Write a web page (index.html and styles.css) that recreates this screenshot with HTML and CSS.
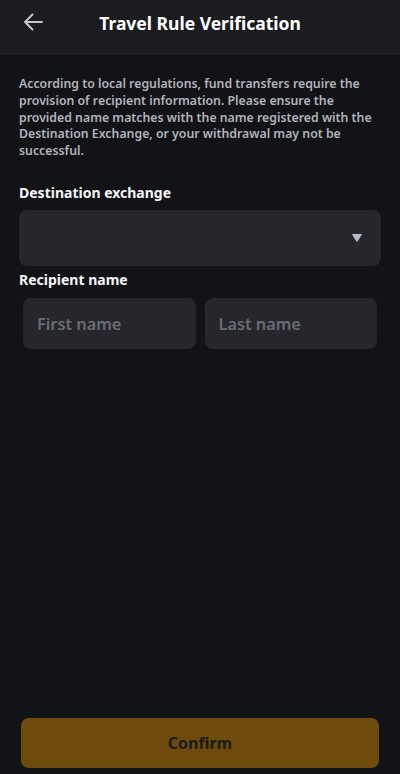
FILE: index.html
```html
<!DOCTYPE html>
<html>
<head>
<meta charset="utf-8">
<link rel="stylesheet" href="styles.css">
</head>
<body>
<div class="page">
  <header class="topbar">
    <svg class="back" width="20" height="18" viewBox="0 0 20 18"><path d="M19 9H2M9.5 1.5L2 9l7.5 7.5" fill="none" stroke="#c4c7cd" stroke-width="2" stroke-linecap="round" stroke-linejoin="round"/></svg>
    <h1 class="title">Travel Rule Verification</h1>
  </header>
  <main class="content">
    <p class="notice">According to local regulations, fund transfers require the provision of recipient information. Please ensure the provided name matches with the name registered with the Destination Exchange, or your withdrawal may not be successful.</p>
    <div class="label">Destination exchange</div>
    <div class="select">
      <svg width="10" height="8" viewBox="0 0 10 8"><path d="M0.5 0.5h9L5 7.5z" fill="#b7bdc6" stroke="#b7bdc6" stroke-linejoin="round"/></svg>
    </div>
    <div class="label label2">Recipient name</div>
    <div class="names">
      <div class="input">First name</div>
      <div class="input">Last name</div>
    </div>
  </main>
  <div class="footer">
    <button class="confirm">Confirm</button>
  </div>
</div>
</body>
</html>
```
FILE: styles.css
```css
html, body {
  margin: 0;
  padding: 0;
  background: #121317;
}
body {
  font-family: "Noto Sans", "Open Sans", sans-serif;
}
.page {
  width: 400px;
  height: 774px;
  display: flex;
  flex-direction: column;
  background: #121317;
}
.topbar {
  height: 55px;
  background: #1b1c20;
  display: flex;
  align-items: center;
  position: relative;
  padding: 0 0 10px 0;
  box-sizing: border-box;
}
.back {
  position: absolute;
  left: 23px;
  top: 13px;
}
.title {
  margin: 0;
  width: 100%;
  text-align: center;
  color: #ffffff;
  font-size: 17.5px;
  font-weight: 700;
  line-height: 24px;
}
.content {
  flex: 1;
  padding: 0 19px;
}
.notice {
  margin: 21px 0 0 0;
  color: #b0b4bc;
  font-size: 12.3px;
  font-weight: 600;
  line-height: 16.8px;
}
.label {
  margin-top: 23px;
  color: #f4f5f7;
  font-size: 14px;
  font-weight: 700;
  line-height: 20px;
}
.label2 {
  margin-top: 4px;
}
.select {
  margin-top: 7px;
  height: 56px;
  background: #25272c;
  border-radius: 8px;
  display: flex;
  align-items: center;
  justify-content: flex-end;
  padding-right: 19px;
}
.names {
  margin-top: 8px;
  padding: 0 4px;
  display: flex;
  gap: 9px;
}
.input {
  flex: 1;
  height: 51px;
  background: #25272c;
  border-radius: 8px;
  display: flex;
  align-items: center;
  padding-left: 14px;
  padding-top: 2px;
  box-sizing: border-box;
  color: #686c74;
  font-size: 16.3px;
  font-weight: 600;
}
.footer {
  padding: 0 21px 6px 21px;
}
.confirm {
  width: 100%;
  height: 50px;
  border: none;
  border-radius: 8px;
  background: #6e4b0c;
  color: #1b1b1d;
  font-family: "Noto Sans", "Open Sans", sans-serif;
  font-size: 16px;
  font-weight: 700;
}
```
